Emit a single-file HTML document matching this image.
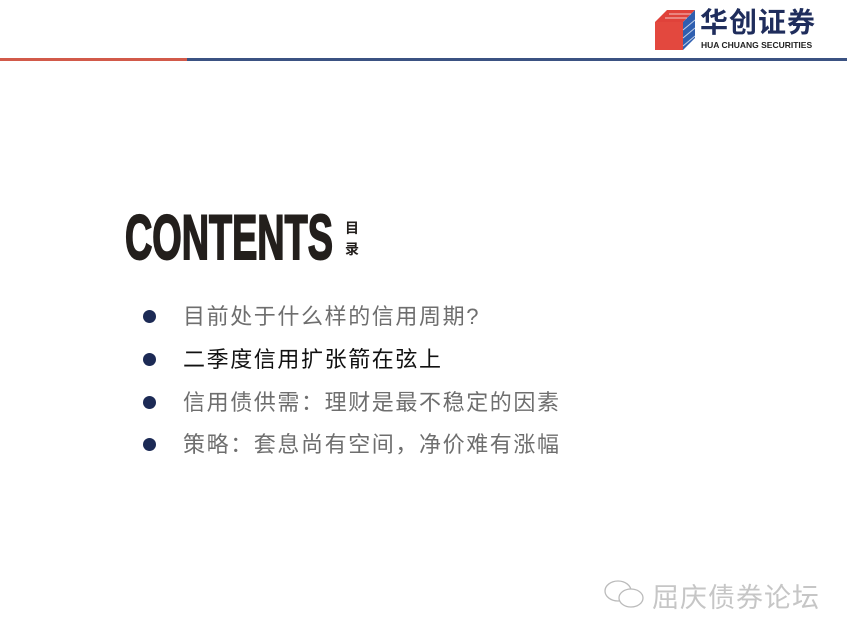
<!DOCTYPE html>
<html><head><meta charset="utf-8"><style>
body{margin:0;width:847px;height:635px;background:#fff;position:relative;overflow:hidden;font-family:"Liberation Sans","Noto Sans CJK SC",sans-serif}
.abs{position:absolute}
.li{position:absolute;left:183px;font-size:22px;letter-spacing:1.6px;line-height:26px;color:#6e6e6e;white-space:nowrap}
.dot{position:absolute;left:143px;width:13px;height:13px;border-radius:50%;background:#1c2a55}
</style></head><body>
<div class="abs" style="left:0;top:58px;width:187px;height:3px;background:#d25a4a"></div>
<div class="abs" style="left:187px;top:58px;width:660px;height:3px;background:#3b5282"></div>
<svg class="abs" style="left:655px;top:10px" width="42" height="42" viewBox="0 0 42 42">
<polygon points="0,12 12,0 40,0 28,12" fill="#e0423a"/>
<polygon points="0,12 28,12 28,40 0,40" fill="#e3483e"/>
<polygon points="28,12 40,0 40,28 28,40" fill="#2f5fb0"/>
<g stroke="#fff" stroke-width="1" opacity=".7"><line x1="14" y1="4" x2="36" y2="4"/><line x1="10" y1="8" x2="32" y2="8"/><line x1="28" y1="20" x2="40" y2="10"/><line x1="28" y1="28" x2="40" y2="18"/><line x1="28" y1="36" x2="40" y2="26"/></g>
</svg>
<div class="abs" style="left:700px;top:7px;font-size:28px;font-weight:bold;color:#1f2d5c;letter-spacing:1px;line-height:32px">华创证券</div>
<div class="abs" style="left:701px;top:40px;font-size:8.5px;font-weight:bold;color:#222;white-space:nowrap">HUA CHUANG SECURITIES</div>
<div class="abs" style="left:125px;top:205px;font-size:63px;font-weight:bold;color:#231f1c;-webkit-text-stroke:2px #231f1c;transform:scaleX(0.6);transform-origin:left top;letter-spacing:0px;line-height:66px">CONTENTS</div>
<div class="abs" style="left:345px;top:218px;font-size:14px;font-weight:bold;color:#231f1c;line-height:21px;width:16px">目<br>录</div>
<div class="dot" style="top:310px"></div><div class="li" style="top:304px">目前处于什么样的信用周期?</div>
<div class="dot" style="top:353px"></div><div class="li" style="top:347px;color:#111">二季度信用扩张箭在弦上</div>
<div class="dot" style="top:396px"></div><div class="li" style="top:390px">信用债供需：理财是最不稳定的因素</div>
<div class="dot" style="top:438px"></div><div class="li" style="top:432px">策略：套息尚有空间，净价难有涨幅</div>
<svg class="abs" style="left:603px;top:578px" width="44" height="34" viewBox="0 0 44 34" fill="none" stroke="#bbb" stroke-width="1.3">
<ellipse cx="15" cy="13" rx="13" ry="10"/><ellipse cx="28" cy="20" rx="12" ry="9" fill="#fff"/>
</svg>
<div class="abs" style="left:652px;top:576px;font-size:27px;color:#c6c6c6;letter-spacing:1px;white-space:nowrap">屈庆债券论坛</div>
</body></html>
